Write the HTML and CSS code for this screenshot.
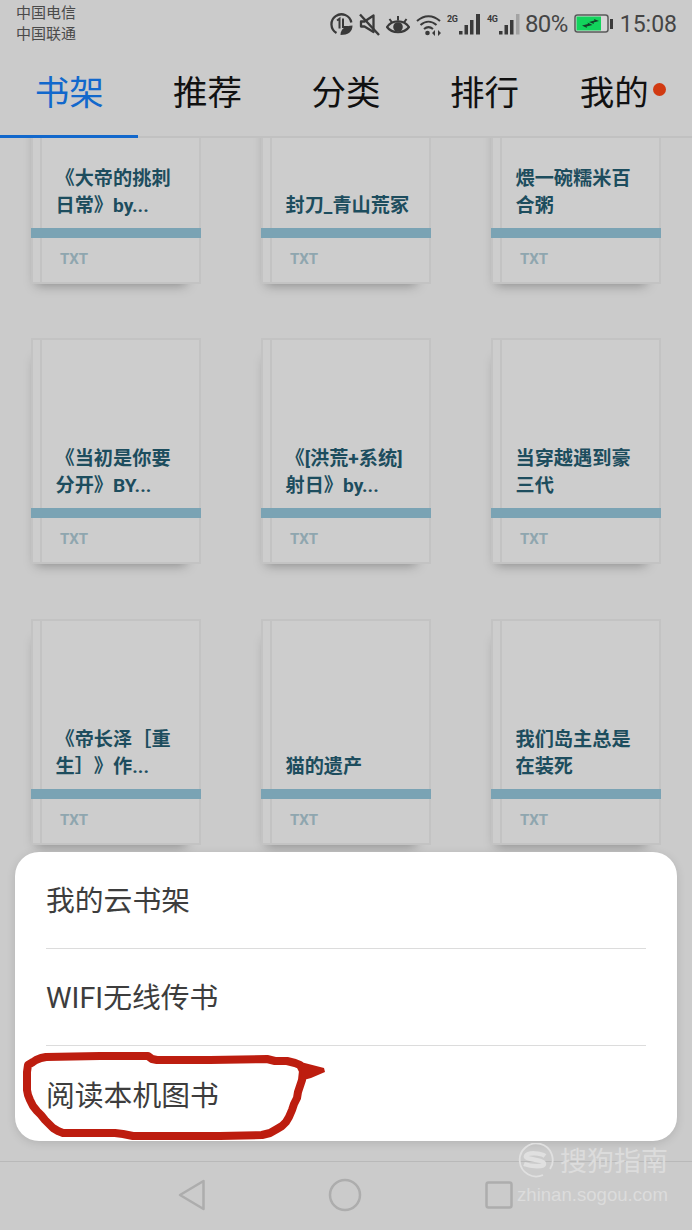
FILE: index.html
```html
<!DOCTYPE html>
<html lang="zh">
<head>
<meta charset="utf-8">
<title>书架</title>
<link rel="stylesheet" href="styles.css">
</head>
<body>
<div class="page">
  <header class="status">
    <div class="carriers"><div>中国电信</div><div>中国联通</div></div>
    <div class="status-right">
      <svg class="ic" width="23" height="24" viewBox="0 0 23 24"><path d="M6.500 21A10 10 0 1 1 21.300 10.500" fill="none" stroke="#3a3a3a" stroke-width="2.300"/><path d="M7 8.500l2.500-1.800v9.800" fill="none" stroke="#3a3a3a" stroke-width="2"/><path d="M13 6.500v8.500h5" fill="none" stroke="#3a3a3a" stroke-width="2"/><path d="M10.500 23c0-6 5-9.500 12-9.500 0 6.500-4.500 9.500-12 9.500z" fill="#3a3a3a"/></svg>
      <svg class="ic" width="21" height="24" viewBox="0 0 21 24"><path d="M2 9.500h3.500L14.500 3.500V20L5.500 14.500H2z" fill="none" stroke="#3a3a3a" stroke-width="2.300" stroke-linejoin="round"/><path d="M1 2.500L20 23" stroke="#3a3a3a" stroke-width="2.400"/></svg>
      <svg class="ic" width="24" height="24" viewBox="0 0 24 24"><path d="M1 15c5-7.500 17-7.500 22 0-5 7-17 7-22 0z" fill="none" stroke="#3a3a3a" stroke-width="2.200"/><circle cx="12" cy="15" r="4.800" fill="#3a3a3a"/><path d="M3.500 7l2.500 3.500M12 4v4.500M20.500 7L18 10.500" stroke="#3a3a3a" stroke-width="2"/></svg>
      <svg class="ic" width="25" height="24" viewBox="0 0 25 24"><path d="M1 9c7-6.500 16-6.500 23 0M4.500 13c5-4.500 11-4.500 16 0M8 17c3-2.500 6-2.500 9 0" fill="none" stroke="#3a3a3a" stroke-width="2"/><circle cx="11.500" cy="21" r="2.300" fill="#3a3a3a"/><path d="M16 21l3-3v6zM25 21l-3-3v6z" fill="#3a3a3a"/></svg>
      <div class="signal"><span class="net">2G</span><svg width="23" height="24" viewBox="0 0 23 24"><path d="M1 19h3.500v3.500H1zM6.500 13h3.500v9.500H6.500zM12 8h3.500v14.500H12zM18 2h4v20.500h-4z" fill="#3a3a3a"/></svg></div>
      <div class="signal"><span class="net">4G</span><svg width="22" height="24" viewBox="0 0 22 24"><path d="M1 19h3.500v3.500H1zM6.500 13h3.500v9.500H6.500zM12 8h3.500v14.500H12z" fill="#3a3a3a"/><path d="M18 2h3.500v20.500H18z" fill="#a3a3a3"/></svg></div>
      <span class="pct">80%</span>
      <svg class="battery" width="39" height="20" viewBox="0 0 39 20"><rect x="1" y="1" width="33" height="17" rx="2.500" fill="#d6d6d6" stroke="#5a5a5a" stroke-width="1.500"/><rect x="2.500" y="2.500" width="24.500" height="14" fill="#12d45c"/><path d="M36 5h3v10h-3z" fill="#3a3a3a"/><path d="M8 11.500l6-1.500-.5-1.500 5 2.500-6 1.500.5 1.500zM15 8l5.500-1.500-.5-1.500 5 2-5.500 1.500.5 1.500z" fill="#14402a"/></svg>
      <span class="time">15:08</span>
    </div>
  </header>

  <nav class="tabs">
    <div class="tab active">书架</div>
    <div class="tab">推荐</div>
    <div class="tab">分类</div>
    <div class="tab">排行</div>
    <div class="tab">我的<span class="dot"></span></div>
  </nav>

  <main class="shelf">
    <div class="grid">
      <article class="book"><div class="title">《大帝的挑刺日常》by...</div><div class="band"></div><div class="kind">TXT</div></article>
      <article class="book"><div class="title">封刀_青山荒冢</div><div class="band"></div><div class="kind">TXT</div></article>
      <article class="book"><div class="title">煨一碗糯米百合粥</div><div class="band"></div><div class="kind">TXT</div></article>
      <article class="book"><div class="title">《当初是你要分开》BY...</div><div class="band"></div><div class="kind">TXT</div></article>
      <article class="book"><div class="title">《[洪荒+系统]射日》by...</div><div class="band"></div><div class="kind">TXT</div></article>
      <article class="book"><div class="title">当穿越遇到豪三代</div><div class="band"></div><div class="kind">TXT</div></article>
      <article class="book"><div class="title">《帝长泽［重生］》作...</div><div class="band"></div><div class="kind">TXT</div></article>
      <article class="book"><div class="title">猫的遗产</div><div class="band"></div><div class="kind">TXT</div></article>
      <article class="book"><div class="title">我们岛主总是在装死</div><div class="band"></div><div class="kind">TXT</div></article>
    </div>
  </main>

  <footer class="navbar">
    <svg width="30" height="34" viewBox="0 0 30 34"><path d="M27.500 3v28L4 17z" fill="none" stroke="#adadad" stroke-width="2.500" stroke-linejoin="round"/></svg>
    <svg width="34" height="34" viewBox="0 0 34 34"><circle cx="17" cy="17" r="15" fill="none" stroke="#adadad" stroke-width="2.500"/></svg>
    <svg width="30" height="30" viewBox="0 0 30 30"><rect x="2.500" y="2.500" width="25" height="25" rx="2" fill="none" stroke="#adadad" stroke-width="2.500"/></svg>
  </footer>

  <section class="sheet">
    <div class="sheet-row">我的云书架</div>
    <div class="sheet-row">WIFI无线传书</div>
    <div class="sheet-row">阅读本机图书</div>
  </section>

  <svg class="scribble" width="692" height="1230" viewBox="0 0 692 1230">
    <path d="M27 1072L28 1065L33 1062L36 1060L41 1058L46 1057L100 1056L148 1056L152 1059L157 1060L210 1060L267 1059L275 1061L287 1061L295 1063L300 1065L303 1071L302 1080L300 1086L298 1092L297 1098L294 1104L292 1110L289 1117L286 1122L282 1126L277 1129L270 1133L262 1135L220 1136L170 1136L133 1136L123 1134L115 1133L80 1133L63 1133L58 1131L53 1128L49 1124L45 1120L41 1115L37 1111L33 1106L30 1100L28 1095L27 1090Z" fill="none" stroke="#bd1d0f" stroke-width="8" stroke-linejoin="round"/>
    <path d="M293 1060L324 1068L325 1072L311 1078L300 1081L302 1070Z" fill="#bd1d0f"/>
  </svg>

  <div class="watermark">
    <svg class="wm-logo" width="38" height="36" viewBox="0 0 38 36"><path d="M27 32A16.500 16.500 0 1 1 34 26" fill="none" stroke="#e0e0e0" stroke-width="1.800"/><path d="M29 13c-4-3-17-4-19 0-2 4 18 3 18 8 0 3-12 3-20 0" fill="none" stroke="#e0e0e0" stroke-width="4.500"/></svg>
    <div class="wm-text">搜狗指南</div>
    <div class="wm-url">zhinan.sogou.com</div>
  </div>
</div>
</body>
</html>
```

FILE: styles.css
```css
* { box-sizing: border-box; }
html, body { margin: 0; padding: 0; }
body { width: 692px; height: 1230px; overflow: hidden; background: #cbcbcb; font-family: Roboto, "Noto Sans CJK SC", sans-serif; }
.page { position: relative; width: 692px; height: 1230px; display: flex; flex-direction: column; overflow: hidden; }

.status { height: 55px; padding: 3px 15px 0 16px; display: flex; justify-content: space-between; flex: none; }
.carriers { font-size: 15px; line-height: 21px; color: #4a4a4a; }
.status-right { display: flex; align-items: center; height: 42px; gap: 6px; color: #454545; }
.ic { flex: none; }
.signal { display: flex; align-items: flex-start; gap: 0; }
.net { width: 11px; font-size: 9px; font-weight: 700; color: #3a3a3a; line-height: 12px; letter-spacing: -.3px; margin-top: 1px; }
.pct { font-size: 24px; letter-spacing: -.6px; margin-left: -1px; }
.battery { flex: none; }
.time { font-size: 23px; margin-left: 1px; }

.tabs { height: 83px; display: flex; flex: none; border-bottom: 2px solid #c1c1c1; }
.tab { flex: 1; display: flex; align-items: center; justify-content: center; height: 83px; padding-bottom: 14px; font-size: 34.500px; color: #111; position: relative; }
.tab.active { color: #1268cc; border-bottom: 3px solid #1268cc; padding-bottom: 11px; }
.dot { width: 13px; height: 13px; border-radius: 50%; background: #d13a12; margin-left: 4px; }

.shelf { flex: 1; overflow: hidden; min-height: 0; }
.grid { display: grid; grid-template-columns: repeat(3, 170px); column-gap: 60px; row-gap: 54.400px; padding: 0 31px; margin-top: -80px; }
.book { height: 226px; border: 2px solid #c3c3c3; background: #cdcdcd; display: flex; flex-direction: column; position: relative; box-shadow: -5px 11px 11px -10px rgba(0,0,0,.34); }
.book::before { content: ""; position: absolute; left: 7px; top: 0; bottom: 0; width: 2px; background: #c3c3c3; }
.title { height: 168px; flex: none; padding: 0 14px 9px 22.500px; display: flex; align-items: flex-end; font-size: 19.200px; font-weight: 700; line-height: 27px; color: #1d4d5e; text-spacing-trim: space-all; }
.band { height: 10px; flex: none; margin: 0 -2px; background: #7aa3b4; position: relative; }
.kind { padding: 12px 0 0 27px; font-size: 15px; line-height: 18px; font-weight: 700; color: #8fa6af; }

.navbar { height: 69px; flex: none; border-top: 1px solid #b9b9b9; display: flex; align-items: center; padding: 0 178px 2px 176px; justify-content: space-between; }

.sheet { position: absolute; left: 15px; top: 852px; width: 662px; height: 289px; background: #fff; border-radius: 24px; padding: 0 31px; box-shadow: 0 2px 10px rgba(0,0,0,.12); }
.sheet-row { height: 97px; padding-bottom: 4px; display: flex; align-items: center; font-size: 28.800px; color: #3d3d3d; border-bottom: 1px solid #dcdcdc; }
.sheet-row:last-child { height: 95px; padding: 0 0 1px; border-bottom: 0; }

.scribble { position: absolute; left: 0; top: 0; pointer-events: none; }

.watermark { position: absolute; left: 516px; top: 1141px; width: 160px; height: 70px; }
.wm-logo { position: absolute; left: 0; top: 2px; }
.wm-text { position: absolute; left: 44px; top: 2px; font-size: 27px; line-height: 38px; color: #dcdcdc; white-space: nowrap; }
.wm-url { position: absolute; left: 1px; top: 43px; font-size: 18.600px; line-height: 22px; color: #dcdcdc; white-space: nowrap; font-family: "Liberation Sans", sans-serif; }
```
